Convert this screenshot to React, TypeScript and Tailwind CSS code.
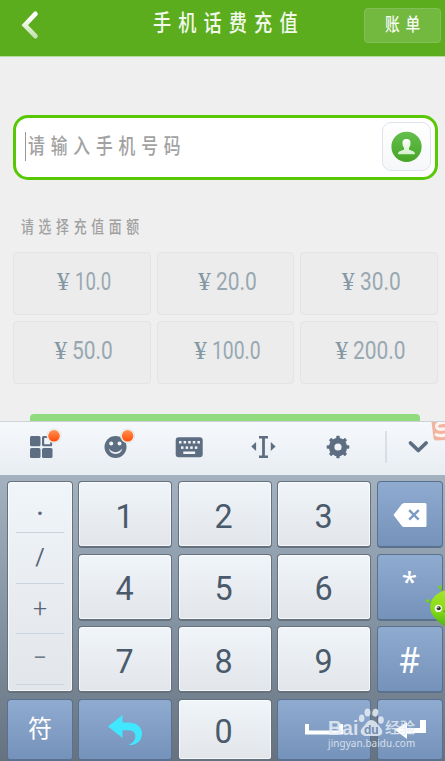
import type { ReactNode } from "react";

const cjk = "font-['Liberation_Serif','Noto_Sans_CJK_SC',sans-serif]";

function Condensed({ text, className }: { text: string; className: string }) {
  return <span className={`inline-block origin-left whitespace-nowrap ${cjk} ${className}`}>{text}</span>;
}

function Header() {
  return (
    <header className="flex h-[57px] items-start border-b border-[#b5dc9b] bg-[#5cad1e]">
      <svg className="ml-[18px] mt-[8px] h-[36px] w-[26px] shrink-0" viewBox="0 0 26 36">
        <defs>
          <linearGradient id="back" x1="0" y1="0" x2="0" y2="1">
            <stop offset="0.15" stopColor="#fff" />
            <stop offset="1" stopColor="#c4e3b0" />
          </linearGradient>
        </defs>
        <path d="M17.5 6.6 6.9 17.8 17.5 29" fill="none" stroke="#3f8a0c" strokeOpacity=".35" strokeWidth="5" strokeLinecap="round" />
        <path d="M17.4 5.9 6.8 17.2 17.4 28.2" fill="none" stroke="url(#back)" strokeWidth="4.8" strokeLinecap="round" />
      </svg>
      <h1 className="ml-[109px] mt-[8px] h-8 w-[211px] text-[#f2f9ec]">
        <Condensed text="手机话费充值" className="scale-x-[.79] text-[23px] font-medium leading-[32px] tracking-[9px]" />
      </h1>
      <button className="mt-[8px] h-[35px] w-[77px] shrink-0 rounded-[4px] border border-[#82c057] bg-[#73b83f] pb-[2px] pl-[20px] text-left text-[#f4faf0]">
        <Condensed text="账单" className="scale-x-[.82] text-[18px] font-medium leading-[30px] tracking-[7px]" />
      </button>
    </header>
  );
}

function PhoneField() {
  return (
    <div className="ml-[13px] mr-[7px] mt-[58px] flex h-[65px] items-center rounded-[15px] border-[3px] border-[#58c805] bg-white pl-[9px] pr-[4px]">
      <span className="mb-[3px] h-[29px] w-px bg-[#999]" />
      <span className="mb-[4px] ml-[2px] flex-1 text-[#a2a2a2]">
        <Condensed text="请输入手机号码" className="scale-x-[.8] text-[21px] font-medium leading-[30px] tracking-[7.3px]" />
      </span>
      <span className="mb-[2px] flex h-[49px] w-[49px] items-center justify-center rounded-[9px] border border-[#dfe4ec] bg-linear-to-b from-white to-[#f6f7f9]">
        <svg width="31" height="31" viewBox="0 0 31 31">
          <defs>
            <linearGradient id="contact" x1="0" y1="0" x2="0" y2="1">
              <stop stopColor="#64bf4c" />
              <stop offset="1" stopColor="#46a526" />
            </linearGradient>
            <linearGradient id="person" x1="0" y1="0" x2="0" y2="1">
              <stop stopColor="#fff" />
              <stop offset="1" stopColor="#d3efca" />
            </linearGradient>
          </defs>
          <circle cx="15.5" cy="15.8" r="15.1" fill="url(#contact)" />
          <path d="M15.5 8c-3.2 0-4.2 2.1-4 4.7.1 1.6.7 2.9 1.5 4v2c-1.9.9-5.9 1.2-5.9 3.8v.8h16.8v-.8c0-2.6-4-2.9-5.9-3.8v-2c.8-1.1 1.4-2.4 1.5-4 .2-2.6-.8-4.7-4-4.7Z" fill="url(#person)" />
        </svg>
      </span>
    </div>
  );
}

interface AmountOption {
  value: string;
  box: string;
  scale: string;
}

const amounts: AmountOption[] = [
  { value: "10.0", box: "w-[36px]", scale: "scale-x-[.70]" },
  { value: "20.0", box: "w-[41px]", scale: "scale-x-[.79]" },
  { value: "30.0", box: "w-[41px]", scale: "scale-x-[.79]" },
  { value: "50.0", box: "w-[41px]", scale: "scale-x-[.79]" },
  { value: "100.0", box: "w-[49px]", scale: "scale-x-[.73]" },
  { value: "200.0", box: "w-[54px]", scale: "scale-x-[.79]" },
];

function Amount({ value, box, scale }: AmountOption) {
  return (
    <button className="flex h-[63px] items-start justify-center rounded-[4px] border border-[#e4e4e4] bg-[#ececec] pl-[4px] pt-[12px] text-[#98a8b2]">
      <span className="mr-[5px] inline-block w-[13px] font-['Liberation_Serif',serif] text-[26px] leading-[33px] text-[#8497a3]">¥</span>
      <span className={`text-left ${box}`}>
        <span className={`inline-block origin-left font-[Roboto,sans-serif] text-[26.5px] leading-[32px] ${scale}`}>{value}</span>
      </span>
    </button>
  );
}

function Toolbar() {
  return (
    <div className="flex h-[54px] shrink-0 items-start border-t border-[#cdd2d8] bg-linear-to-b from-[#f6f9fc] to-[#e8edf2]">
      <svg className="h-[53px] w-[445px]" viewBox="0 422 445 53" fill="#5d6e82">
        <defs>
          <linearGradient id="dot" x1="0" y1="0" x2="0" y2="1">
            <stop stopColor="#ff9250" />
            <stop offset="1" stopColor="#ff4b08" />
          </linearGradient>
        </defs>
        <rect x="30" y="436" width="10.5" height="10.3" rx="1.5" />
        <rect x="30" y="447.9" width="10.5" height="10.2" rx="1.5" />
        <rect x="42" y="447.9" width="10.5" height="10.2" rx="1.5" />
        <path d="M43.5 436h6v2h-5.3v6.3h6v-3h2v3.5q0 1.500-1.500 1.500h-7.200q-1.500 0-1.500-1.500v-7.300q0-1.500 1.500-1.500Z" />
        <circle cx="115.5" cy="447" r="11" />
        <circle cx="111.2" cy="443.6" r="2" fill="#f3f6f9" />
        <circle cx="119.5" cy="443.6" r="2" fill="#f3f6f9" />
        <path d="M108.8 448.5q6.6 7.5 13.5 0-1.2 5.4-6.7 5.4t-6.8-5.4Z" fill="#f3f6f9" />
        {[54, 127.6].map((x) => (
          <g key={x}>
            <circle cx={x} cy="435.8" r="7.1" fill="#f4f3f3" stroke="#dedede" strokeWidth=".7" />
            <circle cx={x} cy="435.8" r="5.8" fill="url(#dot)" />
          </g>
        ))}
        <rect x="175.7" y="437.2" width="27" height="20" rx="3" />
        <g fill="#f3f6f9">
          {[179, 183.6, 188.2, 192.8, 197.4].map((x) => <rect key={x} x={x} y="441" width="2.5" height="2.5" />)}
          {[181, 185.6, 190.2, 194.8].map((x) => <rect key={x} x={x} y="446.4" width="2.5" height="2.5" />)}
          <rect x="183.3" y="451.5" width="11.8" height="2.5" />
        </g>
        <path d="M259 436h9v2.4h-3.1v17.2h3.1v2.4h-9v-2.4h3.1v-17.2H259ZM251.3 446.5l4.8-4.5v9ZM275.6 446.5l-4.8-4.5v9Z" />
        <g transform="translate(338 447)">
          <circle r="6.4" fill="none" stroke="#5d6e82" strokeWidth="5.6" />
          {[0, 45, 90, 135, 180, 225, 270, 315].map((a) => (
            <rect key={a} x="-1.7" y="-11.3" width="3.4" height="4" rx=".8" transform={`rotate(${a})`} />
          ))}
        </g>
        <path d="M386 431v32" stroke="#cbd1d8" strokeWidth="1.2" />
        <path d="m410.5 443 7.8 7.5 7.8-7.5" fill="none" stroke="#5d6e82" strokeWidth="3.8" strokeLinecap="round" strokeLinejoin="round" />
        <path d="M431.5 422H445v18l-9 .5q-2 0-2.400-2Z" fill="#f2b49f" />
        <path d="M446 422.5q-9-.5-9.4 3.5-.2 3.8 5 3.2l4.4-.4M435 434q5 3 11 .7" fill="none" stroke="#fbf4f1" strokeWidth="3.2" />
      </svg>
    </div>
  );
}

function Key({ children, blue = false, className = "" }: { children: ReactNode; blue?: boolean; className?: string }) {
  return (
    <button
      className={`flex items-center justify-center rounded-[4px] border border-b-2 font-[Roboto,'Noto_Sans_CJK_SC',sans-serif] ${
        blue
          ? "border-[#59708e] bg-linear-to-b from-[#90abd0] to-[#7592ba] text-white"
          : "border-[#65717d] bg-linear-to-b from-[#f0f5f9] to-[#e2e5ea] text-[#4a5a6b] shadow-[inset_0_0_0_1px_rgba(255,255,255,.65)]"
      } ${className}`}
    >
      {children}
    </button>
  );
}

function NumberKey({ n }: { n: number }) {
  return (
    <Key>
      <span className="mt-[3px] -translate-x-px scale-x-[.95] text-[34px] leading-none">{n}</span>
    </Key>
  );
}

const symbols = [
  { char: ".", style: "h-[51px] pb-[3px] text-[31px]" },
  { char: "/", style: "h-[50.5px] text-[23px]" },
  { char: "+", style: "h-[50.5px] text-[25px] font-light" },
  { char: "−", style: "h-[50.5px] pb-[2px] text-[25px] font-light" },
];

function Keypad() {
  return (
    <div className="grid flex-1 grid-cols-[66px_94px_94px_94px_66px] grid-rows-[67px_67px_67px_62px] gap-x-[5.4px] gap-y-[5.6px] bg-linear-to-b from-[#a4b2c0] via-[#8594a3] to-[#667280] pl-[7px] pt-[6px]">
      <Key className="row-span-3 flex-col !items-stretch !justify-start px-[8px]">
        {symbols.map(({ char, style }) => (
          <span key={char} className={`flex items-center justify-center border-b border-[#cbd3dc] font-[Roboto,'Noto_Sans',sans-serif] text-[#566577] ${style}`}>
            {char}
          </span>
        ))}
      </Key>
      <NumberKey n={1} />
      <NumberKey n={2} />
      <NumberKey n={3} />
      <Key blue>
        <svg className="mt-[2px]" width="34" height="24" viewBox="0 0 34 24">
          <path d="M.5 12 8.5 1.500Q9.700 0 11.300 0H32q1.500 0 1.500 1.500v21q0 1.500-1.500 1.500H11.300q-1.600 0-2.800-1.500Z" fill="#fff" />
          <path d="m16.2 7.2 9.5 9.5m0-9.5-9.5 9.5" stroke="#7c9bc5" strokeWidth="2.4" />
        </svg>
      </Key>
      <NumberKey n={4} />
      <NumberKey n={5} />
      <NumberKey n={6} />
      <Key blue><span className="mb-[12px] font-['Noto_Sans',sans-serif] text-[28px] leading-none">*</span></Key>
      <NumberKey n={7} />
      <NumberKey n={8} />
      <NumberKey n={9} />
      <Key blue><span className="mt-[2px] scale-x-[.9] font-['Noto_Sans',sans-serif] text-[36px] leading-none">#</span></Key>
      <Key blue><span className="text-[24px] leading-none">符</span></Key>
      <Key blue>
        <svg className="mt-[2px]" width="36" height="32" viewBox="0 0 36 32">
          <path d="M1 12.5 15.5 1v7.5h6.2Q35 9.5 35 20.2 34 31 21.5 31q7.2-3 6.8-9.2-.2-5.3-6.600-5.500h-6.200V24Z" fill="#41e6ff" />
        </svg>
      </Key>
      <NumberKey n={0} />
      <Key blue>
        <svg width="38" height="12" viewBox="0 0 38 12"><path d="M2 1v8.500h34V1" fill="none" stroke="#fff" strokeWidth="4" /></svg>
      </Key>
      <Key blue>
        <svg width="32" height="22" viewBox="0 0 32 22"><path d="M26 2h6v13H13v6L1 12l12-8v6h13Z" fill="#fff" /></svg>
      </Key>
    </div>
  );
}

function Watermark() {
  return (
    <div className="pointer-events-none absolute left-[328px] top-[705px] h-[50px] w-[100px] text-[#e6edf5] opacity-85">
      <span className="absolute left-0 top-[14px] font-['Liberation_Sans',sans-serif] text-[19.5px] font-bold leading-[18px]">Bai</span>
      <svg className="absolute left-[30px] top-[3px]" width="27" height="29" viewBox="0 0 27 29" fill="currentColor">
        <ellipse cx="3.7" cy="10.2" rx="2.8" ry="3.8" />
        <ellipse cx="9.5" cy="4.4" rx="3" ry="4" />
        <ellipse cx="17.3" cy="4.7" rx="3" ry="4" transform="rotate(12 17.3 4.7)" />
        <ellipse cx="23" cy="12" rx="2.8" ry="3.7" />
        <path d="M13.3 12c-4 0-5 4.1-8.2 7.1-5 4.7-1.3 9.2 3.200 8.800h10.800c5.300 0 7-4.200 3.200-8.500C19.100 15.800 17.700 12 13.300 12Z" />
      </svg>
      <span className="absolute left-[36px] top-[20px] font-['Liberation_Sans',sans-serif] text-[12px] font-bold leading-[11px] text-[#718eb5]">du</span>
      <span className="absolute left-[57px] top-[12px] whitespace-nowrap font-['Noto_Sans_CJK_SC',sans-serif] text-[15px] font-medium leading-[20px]">经验</span>
      <span className="absolute left-0 top-[33px] whitespace-nowrap font-['Noto_Sans',sans-serif] text-[9.9px] leading-[11px] tracking-[.1px]">jingyan.baidu.com</span>
    </div>
  );
}

function Mascot() {
  return (
    <svg className="absolute left-[425px] top-[584px]" width="20" height="43" viewBox="0 0 20 43">
      <defs>
        <linearGradient id="alien" x1="0" y1="0" x2="0" y2="1">
          <stop stopColor="#a6e22c" />
          <stop offset=".55" stopColor="#84dc14" />
          <stop offset="1" stopColor="#4fb414" />
        </linearGradient>
      </defs>
      <path d="m3 17 6 3.2M15.3 3l2.600 6" stroke="#6cc11f" strokeWidth="1.6" />
      <circle cx="2.6" cy="16.8" r="1.8" fill="#73d221" />
      <circle cx="15" cy="3" r="1.8" fill="#73d221" />
      <path d="M20 6.5C12 8.5 6 14.2 5.2 22 4.6 30 12 37.5 20 42.5Z" fill="url(#alien)" />
      <circle cx="13.3" cy="24.4" r="3.6" fill="#f7f8f6" />
      <circle cx="13.7" cy="24.3" r="2" fill="#26351d" />
      <circle cx="13" cy="23.6" r=".7" fill="#fff" />
      <path d="M18.5 28q1-1.5 1.5-1.4" stroke="#477b1d" fill="none" />
    </svg>
  );
}

export default function App() {
  return (
    <main className="relative flex h-[761px] w-[445px] flex-col overflow-hidden bg-[#efefef]">
      <section className="h-[421px] shrink-0">
        <Header />
        <PhoneField />
        <p className="ml-[21px] mt-[35px] h-[25px] text-[#a1a1a1]">
          <Condensed text="请选择充值面额" className="scale-x-[.78] text-[16.5px] font-medium leading-[24px] tracking-[6px]" />
        </p>
        <div className="ml-[13px] mr-[7px] mt-[12px] grid grid-cols-3 gap-[6px]">
          {amounts.map((a) => <Amount key={a.value} {...a} />)}
        </div>
        <div className="ml-[30px] mt-[30px] h-[7px] w-[390px] rounded-t-[4px] bg-[#8fdb7d]" />
      </section>
      <Toolbar />
      <Keypad />
      <Mascot />
      <Watermark />
    </main>
  );
}
